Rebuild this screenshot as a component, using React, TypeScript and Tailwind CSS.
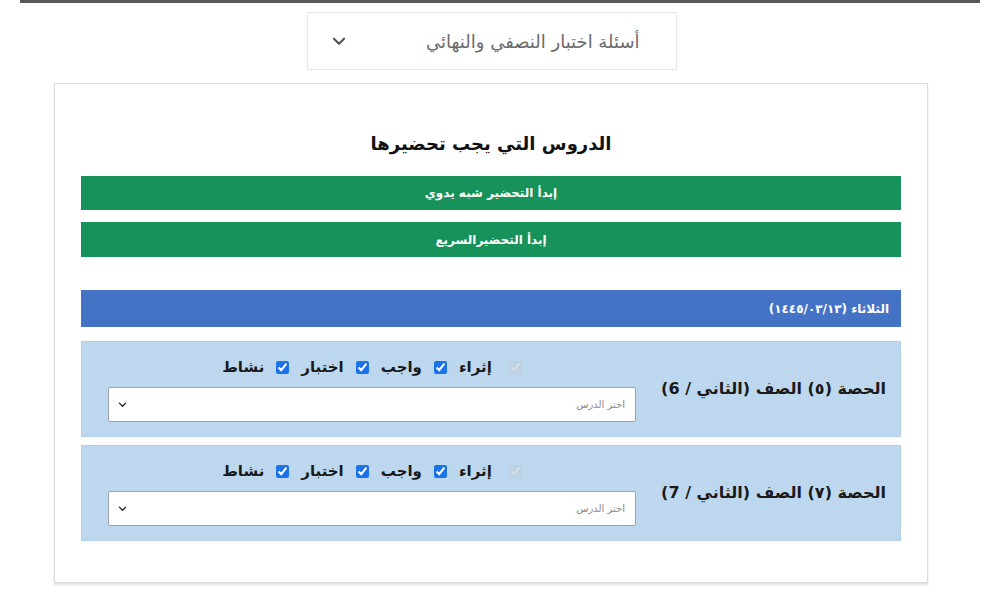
import React from "react";

const periods = [
  { label: "الحصة (٥) الصف (الثاني / 6)" },
  { label: "الحصة (٧) الصف (الثاني / 7)" },
];

const options = ["إثراء", "واجب", "اختبار", "نشاط"];

function Chevron({ className }: { className?: string }) {
  return (
    <svg viewBox="0 0 16 16" className={className} fill="none" stroke="currentColor" strokeWidth="2" strokeLinecap="round" strokeLinejoin="round">
      <path d="M3.5 6l4.5 4.5L12.5 6" />
    </svg>
  );
}

function PeriodRow({ label }: { label: string }) {
  return (
    <div className="flex h-[96px] items-center bg-[#bdd7ee] border border-[#b4cfe8] pr-[14px] pl-[26px]">
      <div className="w-[250px] shrink-0 text-[16px] font-bold text-[#1a1a1a]">{label}</div>
      <div className="flex flex-1 flex-col items-center gap-[9px]">
        <div className="flex items-center gap-[7px] text-[15px] font-bold text-[#1a1a1a]">
          <input type="checkbox" checked disabled readOnly className="w-[13px] h-[13px] ml-[10px] opacity-40" />
          {options.map((o, i) => (
            <React.Fragment key={o}>
              <span>{o}</span>
              {i < options.length - 1 && (
                <input type="checkbox" checked readOnly className="w-[13px] h-[13px] mx-[5px] accent-[#1a73e8]" />
              )}
            </React.Fragment>
          ))}
        </div>
        <div className="flex h-[35px] w-full items-center justify-between bg-white border border-[#9aa4ad] rounded-[2px] pr-[10px] pl-[8px]">
          <span className="text-[10px] text-[#888]">اختر الدرس</span>
          <Chevron className="w-[11px] h-[11px] text-[#222]" />
        </div>
      </div>
    </div>
  );
}

export default function App() {
  return (
    <div dir="rtl" className="min-h-[600px] bg-white" style={{ fontFamily: '"DejaVu Sans", "Noto Sans", sans-serif' }}>
      <div className="mx-[20px] h-[3px] bg-[#5a5a5a]" />
      <div className="flex justify-center pt-[9px] pr-[17px]">
        <div className="flex h-[58px] w-[370px] items-center justify-between border border-[#e6e6e6] bg-white pr-[36px] pl-[22px]">
          <span className="text-[18px] text-[#6b6b6b]">أسئلة اختبار النصفي والنهائي</span>
          <Chevron className="w-[18px] h-[18px] text-[#555]" />
        </div>
      </div>
      <div className="mr-[72px] ml-[54px] mt-[13px] h-[500px] border border-[#dcdcdc] shadow-[0_2px_2px_rgba(0,0,0,0.12)] px-[26px]">
        <h1 className="mt-[46px] text-center text-[18px] font-bold text-[#111]">الدروس التي يجب تحضيرها</h1>
        <div className="mt-[19px] flex flex-col gap-[12px]">
          <div className="flex h-[34px] items-center justify-center bg-[#17925a] text-[12px] font-bold text-white">إبدأ التحضير شبه يدوي</div>
          <div className="flex h-[35px] items-center justify-center bg-[#17925a] text-[12px] font-bold text-white">إبدأ التحضيرالسريع</div>
        </div>
        <div className="mt-[33px] flex h-[37px] items-center bg-[#4472c4] pr-[12px] text-[12px] font-bold text-white">الثلاثاء (١٤٤٥/٠٣/١٣)</div>
        <div className="mt-[14px] flex flex-col gap-[8px]">
          {periods.map((p) => (
            <PeriodRow key={p.label} label={p.label} />
          ))}
        </div>
      </div>
    </div>
  );
}
